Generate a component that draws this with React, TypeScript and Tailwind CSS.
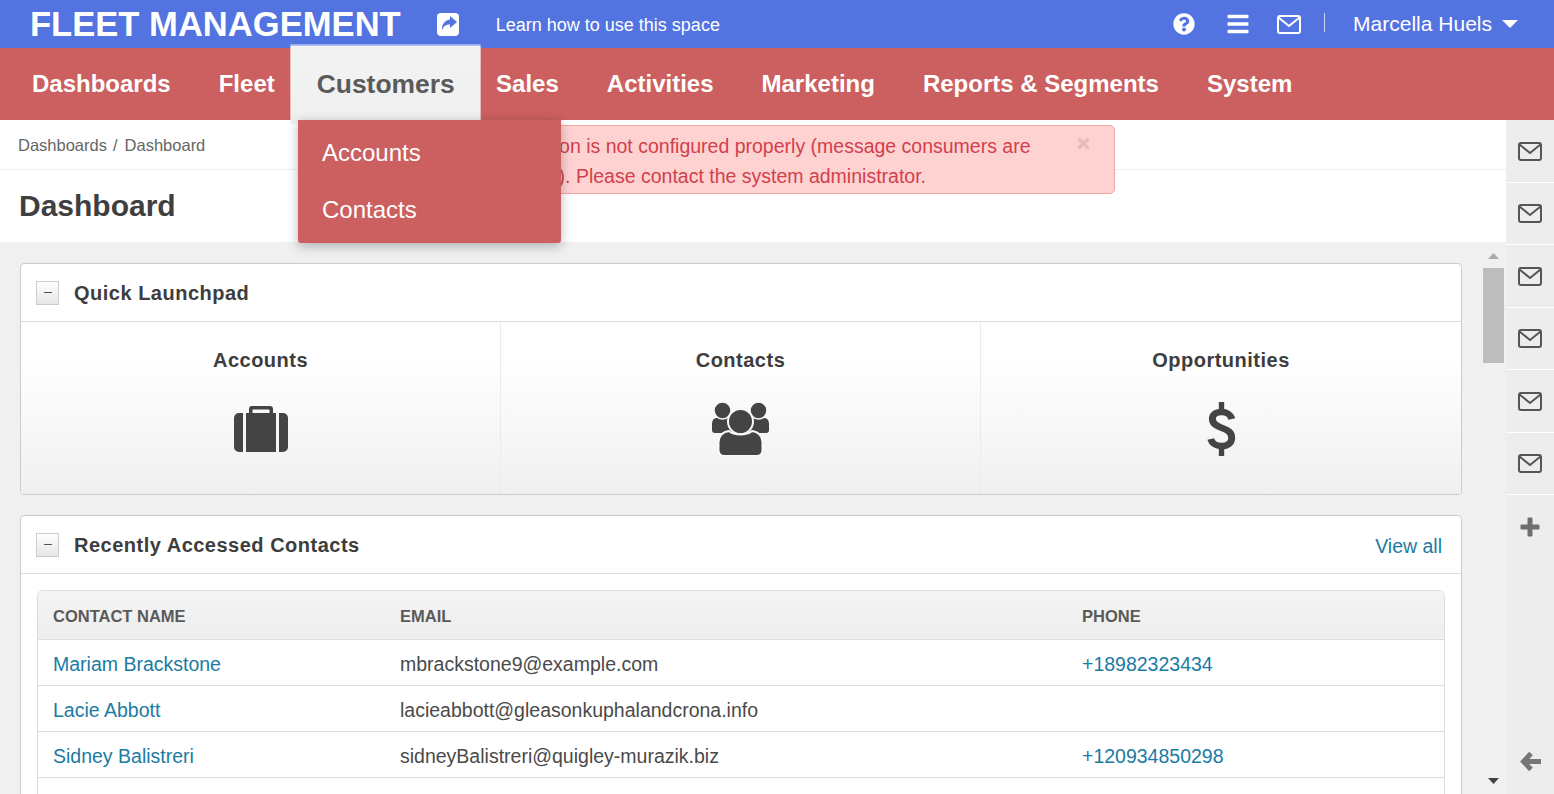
import React from 'react';
import { FaQuestionCircle, FaBars, FaTimes } from 'react-icons/fa';

const navItems = ['Dashboards', 'Fleet', 'Customers', 'Sales', 'Activities', 'Marketing', 'Reports & Segments', 'System'];

const contacts = [
  { name: 'Mariam Brackstone', email: 'mbrackstone9@example.com', phone: '+18982323434' },
  { name: 'Lacie Abbott', email: 'lacieabbott@gleasonkuphalandcrona.info', phone: '' },
  { name: 'Sidney Balistreri', email: 'sidneyBalistreri@quigley-murazik.biz', phone: '+120934850298' },
  { name: '', email: '', phone: '' },
];

const ShareIcon = () => (
  <svg width="22" height="23" viewBox="0 0 22 23" className="ml-[36px] shrink-0">
    <rect width="22" height="23" rx="4" fill="#fff" />
    <path fill="#5373e0" d="M13 3l7 6-7 6v-3.500c-4 0-6.500 1.500-8 6-.5-6 2.500-10 8-11z" />
  </svg>
);

const EnvelopeIcon = () => (
  <svg width="24" height="19" viewBox="0 0 24 19" fill="none" stroke="currentColor" strokeWidth="2" className="shrink-0">
    <rect x="1" y="1" width="22" height="17" rx="2" />
    <path d="M1.500 2.500L12 11 22.500 2.500" />
  </svg>
);

const SuitcaseIcon = () => (
  <svg width="54" height="46" viewBox="0 0 54 46" className="text-[#444]" fill="currentColor">
    <path fillRule="evenodd" d="M18 0h18a3 3 0 0 1 3 3v4h3v39H12V7h3V3a3 3 0 0 1 3-3zm1 3.500a.5.5 0 0 0-.5.500v3h17V4a.5.5 0 0 0-.5-.5z" />
    <path d="M9 7v39H5a5 5 0 0 1-5-5V12a5 5 0 0 1 5-5zM45 7h4a5 5 0 0 1 5 5v29a5 5 0 0 1-5 5h-4z" />
  </svg>
);

const GroupIcon = () => (
  <svg width="57" height="54" viewBox="0 0 57 54" className="text-[#444]" fill="currentColor">
    <path d="M5 16h10c4 0 6 4 6 8v7H3c-2 0-3-1-3-3v-5c0-4 1-7 5-7z" />
    <path d="M52 16H42c-4 0-6 4-6 8v7h18c2 0 3-1 3-3v-5c0-4-1-7-5-7z" />
    <circle cx="10.500" cy="8.500" r="8.500" stroke="#f9f9f9" strokeWidth="1.500" />
    <circle cx="46.500" cy="8.500" r="8.500" stroke="#f9f9f9" strokeWidth="1.500" />
    <path stroke="#f8f8f8" strokeWidth="2" d="M17 29c3 2.500 7 3.500 11.500 3.500S37 31.500 40 29c6 .5 10.500 5 10.500 11v8c0 4-2.500 6-6 6h-32c-3.500 0-6-2-6-6v-8c0-6 4.500-10.500 10.500-11z" />
    <circle cx="28.500" cy="19.500" r="12.500" stroke="#f8f8f8" strokeWidth="2" />
  </svg>
);

const DollarIcon = () => (
  <svg width="29" height="54" viewBox="0 0 27 54" preserveAspectRatio="none" className="text-[#444]" fill="none" stroke="currentColor">
    <path strokeWidth="6.500" d="M23 17C22 12.500 18 10 13.500 10 8 10 5 13 5 17c0 5 4 7 9 9 5 2 9 4 9 10 0 5-4 8-9.500 8C8 44 4.500 41 3.500 37" />
    <path strokeWidth="5" d="M13.500 0v9M13.500 45v9" />
  </svg>
);

const Toggle = () => (
  <button className="w-[23px] h-[24px] border border-[#ccc] bg-gradient-to-b from-white to-[#e6e6e6] flex items-center justify-center shrink-0">
    <span className="block w-[8px] h-[1px] bg-[#555]" />
  </button>
);

const Launch = ({ title, children, last }: { title: string; children: React.ReactNode; last?: boolean }) => (
  <div className={`w-1/3 flex flex-col items-center pt-[26px] ${last ? '' : 'border-r border-[#ebebeb]'}`}>
    <div className="text-[20px] leading-[24px] font-bold tracking-[0.5px] text-[#3d3d3d]">{title}</div>
    <div className="h-[54px] mt-[30px] flex items-center justify-center">{children}</div>
  </div>
);

const App: React.FC = () => {
  return (
    <div
      className="relative w-full h-screen overflow-hidden flex flex-col bg-[#f0f0f0] text-[#4a4a4a]"
      style={{ fontFamily: '"Liberation Sans", Arial, sans-serif' }}
    >
      {/* Top bar */}
      <header className="h-12 shrink-0 bg-[#5373e0] text-white flex items-center">
        <div className="ml-[30px] text-[34.600px] leading-[48px] font-bold whitespace-nowrap">FLEET MANAGEMENT</div>
        <ShareIcon />
        <div className="ml-[37px] text-[18px] mt-[2px]">Learn how to use this space</div>
        <div className="ml-auto flex items-center">
          <FaQuestionCircle className="text-[22px]" />
          <FaBars className="ml-[31px] text-[24px]" />
          <div className="ml-[27px]">
            <EnvelopeIcon />
          </div>
          <div className="ml-[23px] w-px h-[19px] bg-white/70 -mt-[4px]" />
          <div className="ml-[28px] text-[21px] leading-[24px] whitespace-nowrap">Marcella Huels</div>
          <svg width="16" height="8" viewBox="0 0 16 8" className="ml-[10px] mr-[36px]" fill="currentColor">
            <path d="M0 0h16L8 8z" />
          </svg>
        </div>
      </header>

      {/* Main nav */}
      <nav className="h-[72px] shrink-0 bg-[#cc5f60] flex pl-2 text-white text-[24px] font-bold">
        {navItems.map((item) =>
          item === 'Customers' ? (
            <div
              key={item}
              className="relative z-10 scale-110 h-[72px] px-6 pb-px flex items-center bg-gradient-to-b from-[#f3f3f3] to-[#efefef] text-[#5a5a5a] border-t border-[#c4cfef]"
            >
              {item}
            </div>
          ) : (
            <div key={item} className="h-[72px] px-6 flex items-center whitespace-nowrap">
              {item}
            </div>
          ),
        )}
      </nav>

      {/* Customers menu */}
      <div className="absolute z-20 left-[298px] top-[120px] w-[263px] h-[123px] pt-[4px] bg-[#cc5f60] rounded-b-[3px] shadow-[0_3px_12px_rgba(0,0,0,0.28)] text-white text-[24px]">
        <div className="h-[57px] pl-6 flex items-center">Accounts</div>
        <div className="h-[57px] pl-6 flex items-center">Contacts</div>
      </div>

      {/* Alert */}
      <div className="absolute z-10 left-[380px] top-[125px] w-[735px] h-[69px] rounded-[5px] border border-[#f3a6a6] bg-[#ffd2d2] text-[#d1404c] text-[19.500px] leading-[30px] pt-[5px] whitespace-nowrap">
        <div className="pl-[67.500px]">The application is not configured properly (message consumers are</div>
        <div className="pl-[80px]">not running). Please contact the system administrator.</div>
        <FaTimes className="absolute right-[22px] top-[9px] text-[17px] text-[#e9b9bd]" />
      </div>

      <div className="flex-1 min-h-0 flex">
        <div className="flex-1 min-w-0 flex flex-col">
          {/* Breadcrumb */}
          <div className="h-[50px] shrink-0 bg-white border-b border-[#f0f0f0] flex items-center pl-[18px] pt-[2px] text-[16.500px] text-[#666]">
            Dashboards<span className="ml-[6px] mr-[7px]">/</span>Dashboard
          </div>
          <div className="h-[72px] shrink-0 bg-white flex items-center pl-[19px] pb-[2px] text-[30px] font-bold text-[#3f3f3f]">Dashboard</div>

          {/* Scrolling content */}
          <div className="flex-1 min-h-0 flex">
            <main className="flex-1 min-w-0 overflow-hidden pl-5 pr-[21px] pt-[21px]">
              <section className="h-[232px] bg-white border border-[#ccc] rounded-[4px] flex flex-col overflow-hidden">
                <div className="h-[58px] shrink-0 border-b border-[#ddd] flex items-center pl-[15px]">
                  <Toggle />
                  <h2 className="ml-[15px] text-[20px] font-bold tracking-[0.5px] text-[#3d3d3d]">Quick Launchpad</h2>
                </div>
                <div className="flex-1 flex bg-gradient-to-b from-white from-[20%] to-[#f0f0f0]">
                  <Launch title="Accounts"><SuitcaseIcon /></Launch>
                  <Launch title="Contacts"><GroupIcon /></Launch>
                  <Launch title="Opportunities" last><DollarIcon /></Launch>
                </div>
              </section>

              <section className="mt-5 bg-white border border-[#ccc] rounded-t-[4px]">
                <div className="h-[58px] border-b border-[#ddd] flex items-center pl-[15px] pr-[19px]">
                  <Toggle />
                  <h2 className="ml-[15px] text-[20px] font-bold tracking-[0.5px] text-[#3d3d3d]">Recently Accessed Contacts</h2>
                  <a className="ml-auto mt-1 text-[19.500px] text-[#1b7ba3]">View all</a>
                </div>
                <div className="mx-4 mt-4 border-x border-t border-[#ddd] rounded-t-[6px] overflow-hidden">
                  <table className="w-full table-fixed border-collapse text-[19.500px]">
                    <thead>
                      <tr className="h-[48px] bg-gradient-to-b from-[#f4f4f4] to-[#eeeeee] border-b border-[#ddd] text-left text-[16.500px] text-[#5a5a5a]">
                        <th className="w-[347px] pl-[15px] pt-[3px] font-bold">CONTACT NAME</th>
                        <th className="w-[682px] pl-[15px] pt-[3px] font-bold">EMAIL</th>
                        <th className="pl-[15px] pt-[3px] font-bold">PHONE</th>
                      </tr>
                    </thead>
                    <tbody>
                      {contacts.map((c, i) => (
                        <tr key={i} className="h-[46px] border-b border-[#ddd]">
                          <td className="pl-[15px] pt-[6px] text-[#1b7ba3]">{c.name}</td>
                          <td className="pl-[15px] pt-[6px] text-[#4a4a4a]">{c.email}</td>
                          <td className="pl-[15px] pt-[6px] text-[#1b7ba3]">{c.phone}</td>
                        </tr>
                      ))}
                    </tbody>
                  </table>
                </div>
              </section>
            </main>

            {/* Scrollbar */}
            <div className="w-[23px] shrink-0 pr-[2px] flex flex-col justify-between items-stretch">
              <div>
                <svg width="11" height="6" viewBox="0 0 11 6" className="mx-auto mt-[11px] text-[#aaa]" fill="currentColor">
                  <path d="M5.500 0L11 6H0z" />
                </svg>
                <div className="mt-[9px] h-[95px] bg-[#bdbdbd]" />
              </div>
              <svg width="11" height="6" viewBox="0 0 11 6" className="mx-auto mb-[10px] text-[#444]" fill="currentColor">
                <path d="M0 0h11L5.500 6z" />
              </svg>
            </div>
          </div>
        </div>

        {/* Right rail */}
        <aside className="w-12 shrink-0 bg-[#ededed] flex flex-col text-[#555]">
          {[0, 1, 2, 3, 4, 5].map((i) => (
            <div key={i} className="h-[62.500px] shrink-0 border-b border-white flex items-center justify-center pt-px">
              <EnvelopeIcon />
            </div>
          ))}
          <div className="h-[62.500px] shrink-0 flex items-center justify-center text-[#6f6f6f] pt-[2px]">
            <svg width="20" height="20" viewBox="0 0 20 20" fill="currentColor">
              <path d="M7.500 1.500a1 1 0 0 1 1-1h3a1 1 0 0 1 1 1v6h6a1 1 0 0 1 1 1v3a1 1 0 0 1-1 1h-6v6a1 1 0 0 1-1 1h-3a1 1 0 0 1-1-1v-6h-6a1 1 0 0 1-1-1v-3a1 1 0 0 1 1-1h6z" />
            </svg>
          </div>
          <div className="mt-auto h-[66px] flex items-center justify-center text-[#777]">
            <svg width="21" height="21" viewBox="0 0 21 21" fill="none" stroke="currentColor" strokeWidth="5">
              <path d="M11 2.500L3.500 10.500 11 18.500M4 10.500h17" />
            </svg>
          </div>
        </aside>
      </div>
    </div>
  );
};

export default App;
